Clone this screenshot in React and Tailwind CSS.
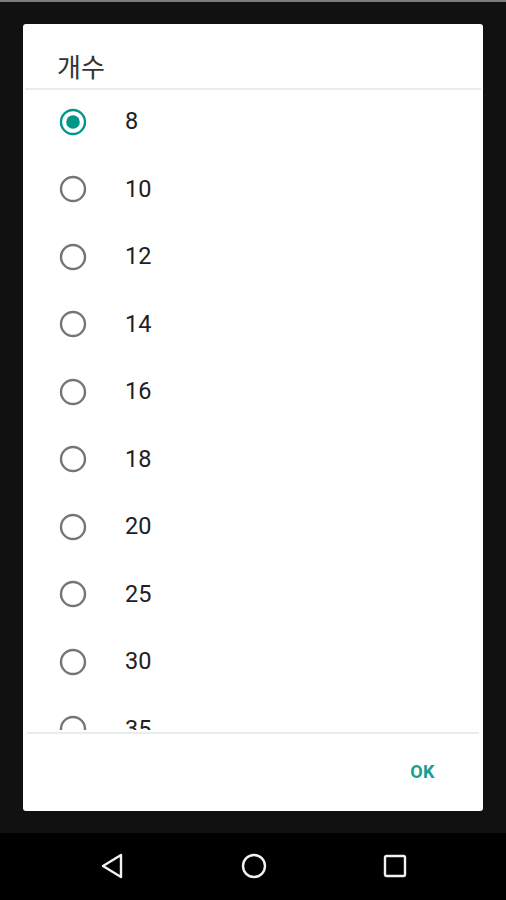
const options = [8, 10, 12, 14, 16, 18, 20, 25, 30, 35];

function Radio({checked}) {
    return (
        <svg width="30" height="30" viewBox="0 0 30 30">
            <circle cx="15" cy="15" r="12" fill="none" stroke={checked ? "#009688" : "#757575"} strokeWidth="2.4" />
            {checked && <circle cx="15" cy="15" r="6.8" fill="#009688" />}
        </svg>
    );
}

export default function App() {
    const selected = 8;

    return (
        <div className="w-[506px] h-[900px] flex flex-col bg-black font-['Roboto','Noto_Sans_CJK_KR',sans-serif]">
            <div className="h-[2px] bg-[#7c7c7c]" />

            <div className="flex-1 bg-[#111111] px-[23px] pt-[22px] pb-[22px] flex">
                <div className="flex-1 bg-white rounded-[3px] flex flex-col overflow-hidden">
                    {/* title */}
                    <div className="h-[64px] pl-[34px] flex items-end pb-[9px]">
                        <span className="text-[26px] leading-none text-[#333333] font-['Noto_Sans_CJK_KR',sans-serif]">개수</span>
                    </div>
                    <div className="h-[2px] mx-[2px] bg-[#ebebeb]" />

                    {/* list */}
                    <div className="h-[642px] -mt-[2px] mb-[2px] overflow-hidden">
                        {options.map((opt) => (
                            <div key={opt} className="h-[67.5px] flex items-center pl-[35px]">
                                <Radio checked={opt === selected} />
                                <span className="ml-[37px] text-[23.5px] text-[#212121]">{opt}</span>
                            </div>
                        ))}
                    </div>
                    <div className="h-[2px] mx-[4px] bg-[#ebebeb]" />

                    {/* footer */}
                    <div className="flex-1 flex items-center justify-end pr-[48px] pb-[2px]">
                        <span className="text-[18px] font-bold text-[#16a08f] tracking-wide">OK</span>
                    </div>
                </div>
            </div>

            {/* nav bar */}
            <div className="h-[67px] bg-black flex items-center justify-center gap-[116px] pb-[2px]">
                <svg width="26" height="28" viewBox="0 0 26 28">
                    <path d="M22 3 L4 14 L22 25 Z" fill="none" stroke="#f2f2f2" strokeWidth="2.4" strokeLinejoin="round" />
                </svg>
                <svg width="26" height="26" viewBox="0 0 26 26">
                    <circle cx="13" cy="13" r="11" fill="none" stroke="#f2f2f2" strokeWidth="2.4" />
                </svg>
                <svg width="24" height="24" viewBox="0 0 24 24">
                    <rect x="2" y="2" width="20" height="20" rx="1.5" fill="none" stroke="#f2f2f2" strokeWidth="2.4" />
                </svg>
            </div>
        </div>
    );
}
